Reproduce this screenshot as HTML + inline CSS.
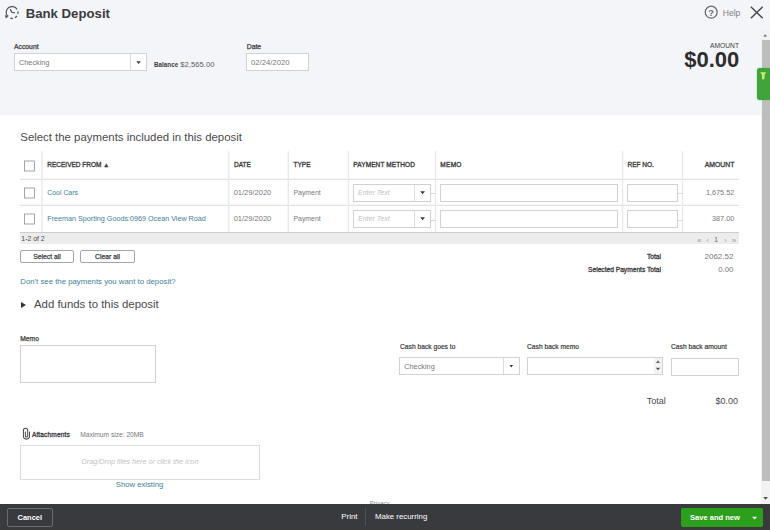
<!DOCTYPE html>
<html><head><meta charset="utf-8"><title>Bank Deposit</title>
<style>
*{box-sizing:border-box;margin:0;padding:0}
html,body{width:770px;height:530px;overflow:hidden;background:#fff;font-family:"Liberation Sans",sans-serif;color:#4a4a4d}
.abs{position:absolute}
.t{position:absolute;white-space:nowrap;line-height:1}
.box{position:absolute;background:#fff;border:1px solid #d2d2d2}
</style></head><body>
<div class="abs" style="left:0px;top:0px;width:770px;height:115px;background:#f4f5f8;"></div>
<svg class="abs" style="left:0;top:0" width="24" height="24" viewBox="0 0 24 24" fill="none" stroke="#55565a" stroke-width="1.25">
<path d="M7.45 16.08A5.9 5.9 0 1 1 17.10 9.32 M17.91 11.43A5.9 5.9 0 0 1 17.80 13.98 M16.93 15.83A5.9 5.9 0 0 1 14.87 17.66 M12.92 18.29A5.9 5.9 0 0 1 10.28 18.06"/><path d="M4.7 15.3l4.2 0.4-2.9 2.8z" fill="#55565a" stroke="none"/><path d="M10.4 9.6l1.6 2.9 2.4 0.2" stroke-linecap="round"/>
</svg>
<div class="t" style="top:7px;font-size:13.2px;color:#3c3c40;font-weight:bold;left:25.7px;">Bank Deposit</div>
<svg class="abs" style="left:703px;top:4px" width="17" height="17" viewBox="703 4 17 17"><circle cx="711.2" cy="12.15" r="5.95" fill="none" stroke="#6a6b6f" stroke-width="1.25"/><text x="711.2" y="15.5" font-size="9.3" font-weight="bold" text-anchor="middle" fill="#6a6b6f" font-family="Liberation Sans, sans-serif">?</text></svg>
<div class="t" style="top:9px;font-size:8.6px;color:#808186;left:722.7px;">Help</div>
<svg class="abs" style="left:749.8px;top:5.9px" width="13.5" height="13" viewBox="0 0 13.5 13"><path d="M0.8 0.8l11.9 11.4M12.7 0.8L0.8 12.2" stroke="#4a4a4d" stroke-width="1.5"/></svg>
<div class="t" style="top:44px;font-size:6.8px;color:#3c3c40;-webkit-text-stroke:0.25px #3c3c40;left:14px;">Account</div>
<div class="box" style="left:14px;top:53.4px;width:133px;height:17.6px;border-color:#d2d2d2;"></div>
<div class="abs" style="left:130px;top:54.4px;width:1px;height:15.6px;background:#dcdcdc;"></div>
<div class="t" style="top:59px;font-size:7.3px;color:#77787c;left:19px;">Checking</div>
<svg class="abs" style="left:135px;top:60px" width="7" height="5"><polygon points="1.40,1.20 5.80,1.20 3.60,4.00" fill="#3a3a3a"/></svg>
<div class="t" style="top:61px;font-size:7.7px;color:#5c5d61;left:154px;"><b style="font-size:6.3px;color:#3c3c40">Balance</b> $2,565.00</div>
<div class="t" style="top:44px;font-size:6.8px;color:#3c3c40;-webkit-text-stroke:0.25px #3c3c40;left:246.8px;">Date</div>
<div class="box" style="left:246px;top:53.4px;width:63px;height:17.6px;border-color:#d2d2d2;"></div>
<div class="t" style="top:59px;font-size:7.7px;color:#77787c;left:251px;">02/24/2020</div>
<div class="t" style="top:43px;font-size:6.7px;color:#3c3c40;right:31.00px;">AMOUNT</div>
<div class="t" style="top:49px;font-size:22px;color:#2d2d30;font-weight:bold;right:30.70px;">$0.00</div>
<div class="abs" style="left:761px;top:30px;width:9px;height:474.3px;background:#f1f2f3;"></div>
<div class="abs" style="left:762px;top:40px;width:8px;height:441px;background:#bdbdbd;"></div>
<svg class="abs" style="left:762px;top:33px" width="6" height="5"><polygon points="1.30,3.40 5.10,3.40 3.20,1.20" fill="#666"/></svg>
<svg class="abs" style="left:762px;top:496px" width="7" height="5"><polygon points="1.20,1.00 6.00,1.00 3.60,3.80" fill="#505050"/></svg>
<div class="abs" style="left:757.4px;top:67.8px;width:12.6px;height:32px;background:#40a43c;border-radius:3px 0 0 3px;box-shadow:0 0 1.5px #6fc06a"></div>
<svg class="abs" style="left:760.3px;top:72px" width="6.5" height="7.5" viewBox="0 0 6.5 7.5"><path d="M0.2 0.2h6.1L4.5 3v4.2H2V3z" fill="#cdea6a"/></svg>
<div class="t" style="top:132px;font-size:11.4px;color:#4a4a4d;left:20.3px;">Select the payments included in this deposit</div>
<svg class="abs" style="left:0;top:140px" width="770" height="110" viewBox="0 140 770 110"><line x1="20" x2="739" y1="179.4" y2="179.4" stroke="#e2e2e2" stroke-width="1.1"/><line x1="20" x2="739" y1="205.4" y2="205.4" stroke="#e2e2e2" stroke-width="1.1"/><line x1="42.0" x2="42.0" y1="151.2" y2="232.5" stroke="#e9e9e9" stroke-width="1.4"/><line x1="228.8" x2="228.8" y1="151.2" y2="232.5" stroke="#e9e9e9" stroke-width="1.4"/><line x1="288.3" x2="288.3" y1="151.2" y2="232.5" stroke="#e9e9e9" stroke-width="1.4"/><line x1="348.5" x2="348.5" y1="151.2" y2="232.5" stroke="#e9e9e9" stroke-width="1.4"/><line x1="435.4" x2="435.4" y1="151.2" y2="232.5" stroke="#e9e9e9" stroke-width="1.4"/><line x1="622.6" x2="622.6" y1="151.2" y2="232.5" stroke="#e9e9e9" stroke-width="1.4"/><line x1="682.5" x2="682.5" y1="151.2" y2="232.5" stroke="#e9e9e9" stroke-width="1.4"/></svg>
<div class="abs" style="left:20px;top:232px;width:719px;height:1px;background:#cdcdcd;"></div>
<div class="abs" style="left:20px;top:233px;width:719px;height:11.2px;background:#ececec;"></div>
<svg class="abs" style="left:20px;top:159.4px" width="20" height="14" viewBox="0 0 20 14"><rect x="4.5" y="2" width="10" height="10" fill="#fff" stroke="#8d8f94" stroke-width="0.8"/></svg>
<svg class="abs" style="left:20px;top:185.6px" width="20" height="14" viewBox="0 0 20 14"><rect x="4.5" y="2" width="10" height="10" fill="#fff" stroke="#8d8f94" stroke-width="0.8"/></svg>
<svg class="abs" style="left:20px;top:211.8px" width="20" height="14" viewBox="0 0 20 14"><rect x="4.5" y="2" width="10" height="10" fill="#fff" stroke="#8d8f94" stroke-width="0.8"/></svg>
<div class="t" style="top:162px;font-size:6.5px;color:#3c3c40;-webkit-text-stroke:0.32px #3c3c40;left:47.3px;">RECEIVED FROM <span style="font-size:6px;position:relative;top:-0.5px">▲</span></div>
<div class="t" style="top:162px;font-size:6.5px;color:#3c3c40;-webkit-text-stroke:0.32px #3c3c40;left:234px;">DATE</div>
<div class="t" style="top:162px;font-size:6.5px;color:#3c3c40;-webkit-text-stroke:0.32px #3c3c40;left:293.5px;">TYPE</div>
<div class="t" style="top:162px;font-size:6.5px;color:#3c3c40;-webkit-text-stroke:0.32px #3c3c40;letter-spacing:0.1px;left:353.3px;">PAYMENT METHOD</div>
<div class="t" style="top:162px;font-size:6.5px;color:#3c3c40;-webkit-text-stroke:0.32px #3c3c40;letter-spacing:0.3px;left:440.3px;">MEMO</div>
<div class="t" style="top:162px;font-size:6.5px;color:#3c3c40;-webkit-text-stroke:0.32px #3c3c40;left:627.5px;">REF NO.</div>
<div class="t" style="top:162px;font-size:6.85px;color:#3c3c40;-webkit-text-stroke:0.32px #3c3c40;right:35.70px;">AMOUNT</div>
<div class="t" style="top:190px;font-size:6.9px;color:#3f8294;left:47.3px;">Cool Cars</div>
<div class="t" style="top:189px;font-size:7.5px;color:#77787c;left:233.7px;">01/29/2020</div>
<div class="t" style="top:190px;font-size:6.9px;color:#77787c;left:293.5px;">Payment</div>
<div class="box" style="left:353px;top:184px;width:78px;height:18px;border-color:#d2d2d2;"></div>
<div class="abs" style="left:414px;top:185px;width:1px;height:16px;background:#dcdcdc;"></div>
<div class="t" style="top:189px;font-size:7px;color:#c4c4c4;font-style:italic;left:358px;">Enter Text</div>
<svg class="abs" style="left:419px;top:190px" width="7" height="6"><polygon points="1.25,1.15 5.95,1.15 3.60,4.25" fill="#3a3a3a"/></svg>
<div class="abs" style="left:431px;top:193px;width:4.5px;height:1px;background:#dcdcdc;"></div>
<div class="box" style="left:440px;top:184px;width:178px;height:18px;border-color:#d2d2d2;"></div>
<div class="box" style="left:627px;top:184px;width:51px;height:18px;border-color:#d2d2d2;"></div>
<div class="abs" style="left:678px;top:193px;width:4.5px;height:1px;background:#dcdcdc;"></div>
<div class="t" style="top:189px;font-size:7.3px;color:#77787c;right:35.70px;">1,675.52</div>
<div class="t" style="top:215px;font-size:7.2px;color:#3f8294;left:47.3px;">Freeman Sporting Goods:0969 Ocean View Road</div>
<div class="t" style="top:215px;font-size:7.5px;color:#77787c;left:233.7px;">01/29/2020</div>
<div class="t" style="top:216px;font-size:6.9px;color:#77787c;left:293.5px;">Payment</div>
<div class="box" style="left:353px;top:210px;width:78px;height:18px;border-color:#d2d2d2;"></div>
<div class="abs" style="left:414px;top:211px;width:1px;height:16px;background:#dcdcdc;"></div>
<div class="t" style="top:215px;font-size:7px;color:#c4c4c4;font-style:italic;left:358px;">Enter Text</div>
<svg class="abs" style="left:419px;top:216px" width="7" height="6"><polygon points="1.25,1.15 5.95,1.15 3.60,4.25" fill="#3a3a3a"/></svg>
<div class="abs" style="left:431px;top:220px;width:4.5px;height:1px;background:#dcdcdc;"></div>
<div class="box" style="left:440px;top:210px;width:178px;height:18px;border-color:#d2d2d2;"></div>
<div class="box" style="left:627px;top:210px;width:51px;height:18px;border-color:#d2d2d2;"></div>
<div class="abs" style="left:678px;top:220px;width:4.5px;height:1px;background:#dcdcdc;"></div>
<div class="t" style="top:215px;font-size:7.3px;color:#77787c;right:35.70px;">387.00</div>
<div class="t" style="top:236px;font-size:6.9px;color:#4a4a4d;left:21.3px;">1-2 of 2</div>
<div class="t" style="top:237px;font-size:8px;color:#9a9a9a;left:694.2px;width:10px;text-align:center;">«</div>
<div class="t" style="top:237px;font-size:8px;color:#a8a8a8;left:702.7px;width:10px;text-align:center;">‹</div>
<div class="t" style="top:237px;font-size:6.6px;color:#606060;left:711px;width:10px;text-align:center;">1</div>
<div class="t" style="top:237px;font-size:8px;color:#a8a8a8;left:720.4px;width:10px;text-align:center;">›</div>
<div class="t" style="top:237px;font-size:8px;color:#9a9a9a;left:728.9px;width:10px;text-align:center;">»</div>
<div class="box" style="left:20px;top:250px;width:54px;height:13px;border-color:#a4a6ab;border-radius:2px"></div>
<div class="t" style="top:254px;font-size:6.8px;color:#3c3c40;-webkit-text-stroke:0.25px #3c3c40;left:20px;width:54px;text-align:center;">Select all</div>
<div class="box" style="left:80px;top:250px;width:55px;height:13px;border-color:#a4a6ab;border-radius:2px"></div>
<div class="t" style="top:254px;font-size:6.8px;color:#3c3c40;-webkit-text-stroke:0.25px #3c3c40;left:80px;width:55px;text-align:center;">Clear all</div>
<div class="t" style="top:254px;font-size:6.7px;color:#3c3c40;-webkit-text-stroke:0.3px #3c3c40;right:109.00px;">Total</div>
<div class="t" style="top:253px;font-size:8px;color:#77787c;right:36.60px;">2062.52</div>
<div class="t" style="top:267px;font-size:6.65px;color:#3c3c40;-webkit-text-stroke:0.3px #3c3c40;right:109.00px;">Selected Payments Total</div>
<div class="t" style="top:266px;font-size:7.8px;color:#77787c;right:36.60px;">0.00</div>
<div class="t" style="top:278px;font-size:7.8px;color:#3f8294;left:20.3px;">Don't see the payments you want to deposit?</div>
<div class="abs" style="left:21.2px;top:302.2px;border-top:3.2px solid transparent;border-bottom:3.2px solid transparent;border-left:5.5px solid #333"></div>
<div class="t" style="top:299px;font-size:11.4px;color:#4a4a4d;left:34px;">Add funds to this deposit</div>
<div class="t" style="top:336px;font-size:6.7px;color:#3c3c40;-webkit-text-stroke:0.25px #3c3c40;left:20.3px;">Memo</div>
<div class="box" style="left:20px;top:345px;width:136px;height:38px;border-color:#d2d2d2;"></div>
<div class="t" style="top:344px;font-size:6.7px;color:#3c3c40;-webkit-text-stroke:0.2px #3c3c40;left:400px;">Cash back goes to</div>
<div class="box" style="left:399px;top:357px;width:121px;height:18px;border-color:#d2d2d2;"></div>
<div class="abs" style="left:503px;top:358px;width:1px;height:16px;background:#dcdcdc;"></div>
<div class="t" style="top:363px;font-size:7.3px;color:#77787c;left:404.3px;">Checking</div>
<svg class="abs" style="left:508px;top:363px" width="6" height="5"><polygon points="1.50,1.90 5.10,1.90 3.30,4.50" fill="#3a3a3a"/></svg>
<div class="t" style="top:344px;font-size:6.7px;color:#3c3c40;-webkit-text-stroke:0.2px #3c3c40;left:527px;">Cash back memo</div>
<div class="box" style="left:527px;top:357px;width:136px;height:18px;border-color:#d2d2d2;"></div>
<div class="abs" style="left:654px;top:358px;width:8px;height:16px;background:#f3f3f3;"></div>
<svg class="abs" style="left:654px;top:359px" width="7" height="5"><polygon points="1.80,3.90 6.20,3.90 4.00,1.30" fill="#707070"/></svg>
<svg class="abs" style="left:654px;top:366px" width="7" height="5"><polygon points="1.80,1.70 6.20,1.70 4.00,4.30" fill="#505050"/></svg>
<div class="t" style="top:344px;font-size:6.7px;color:#3c3c40;-webkit-text-stroke:0.2px #3c3c40;left:671px;">Cash back amount</div>
<div class="box" style="left:671px;top:358px;width:68px;height:18px;border-color:#d2d2d2;"></div>
<div class="t" style="top:397px;font-size:9px;color:#4a4a4d;left:646.8px;">Total</div>
<div class="t" style="top:397px;font-size:9px;color:#4a4a4d;right:32.00px;">$0.00</div>
<svg class="abs" style="left:20px;top:425px" width="14" height="17" viewBox="20 425 14 17" fill="none" stroke="#4a4a4d" stroke-width="1.05" stroke-linecap="round"><path d="M29.5 432.1V436.1A3.05 3.05 0 0 1 23.4 436.1V430.3A2.15 2.15 0 0 1 27.7 430.3V435.9A1.17 1.17 0 0 1 25.35 435.9V432.1"/></svg>
<div class="t" style="top:432px;font-size:6.55px;color:#3c3c40;-webkit-text-stroke:0.3px #3c3c40;letter-spacing:0.14px;left:31.9px;">Attachments</div>
<div class="t" style="top:432px;font-size:6.65px;color:#77787c;left:80.3px;">Maximum size: 20MB</div>
<div class="box" style="left:20px;top:445px;width:240px;height:35px;border-color:#dcdcdc;"></div>
<div class="t" style="top:458px;font-size:7.25px;color:#c4c4c4;font-style:italic;left:20px;width:240px;text-align:center;">Drag/Drop files here or click the icon</div>
<div class="t" style="top:481px;font-size:7.7px;color:#3f8294;left:115.8px;">Show existing</div>
<div class="t" style="top:500px;font-size:6px;color:#8a8a8a;left:369.8px;">Privacy</div>
<div class="abs" style="left:0px;top:504.3px;width:770px;height:25.7px;background:#393a3d;"></div>
<div class="abs" style="left:6.5px;top:508px;width:46.5px;height:19.4px;border:1px solid #6a6b70;border-radius:2px"></div>
<div class="t" style="top:514px;font-size:7.45px;color:#fff;font-weight:bold;left:17.6px;">Cancel</div>
<div class="t" style="top:513px;font-size:7.9px;color:#fff;left:341.3px;">Print</div>
<div class="abs" style="left:365px;top:508px;width:1px;height:18px;background:#505155;"></div>
<div class="t" style="top:513px;font-size:7.85px;color:#fff;left:375px;">Make recurring</div>
<div class="abs" style="left:681px;top:508px;width:82px;height:19px;background:#2ca01c;border-radius:2px"></div>
<div class="t" style="top:514px;font-size:7.55px;color:#fff;font-weight:bold;left:690px;">Save and new</div>
<svg class="abs" style="left:751px;top:515px" width="8" height="5"><polygon points="1.00,1.65 6.20,1.65 3.60,4.55" fill="#e8f5e6"/></svg>
</body></html>
